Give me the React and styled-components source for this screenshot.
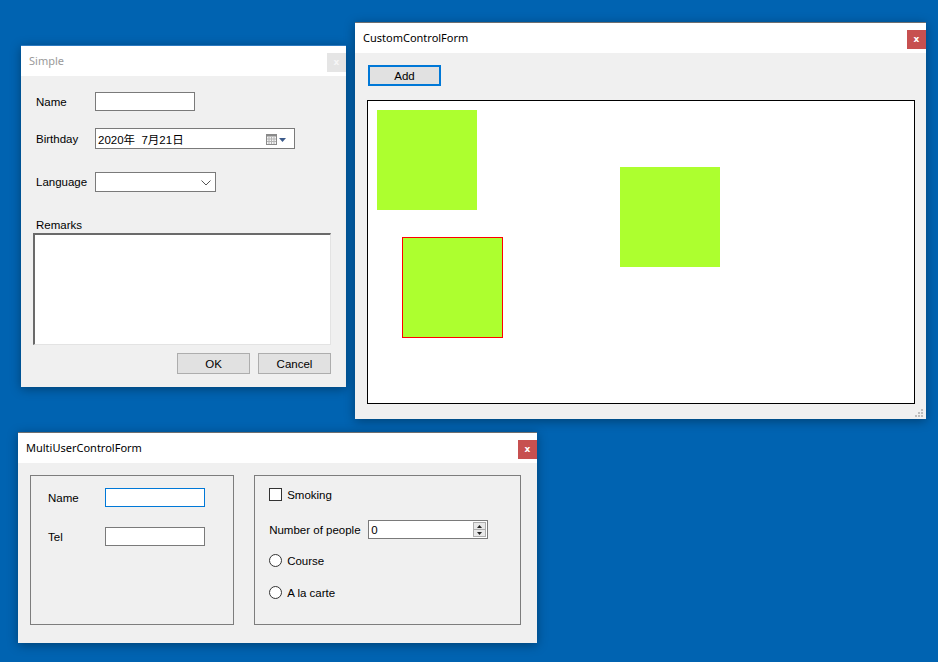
import { createGlobalStyle, styled } from "styled-components";

const GlobalStyle = createGlobalStyle`
  html, body {
    margin: 0;
    padding: 0;
    background: #0063b1;
  }
  body {
    font-family: "Liberation Sans", Arial, sans-serif;
    font-size: 11.5px;
    color: #000;
  }
`;

const Desktop = styled.div`
  position: relative;
  width: 938px;
  height: 662px;
  overflow: hidden;
  background: #0063b1;
`;

const Window = styled.div`
  position: absolute;
  left: ${(p) => p.$x}px;
  top: ${(p) => p.$y}px;
  width: ${(p) => p.$w}px;
  height: ${(p) => p.$h}px;
  display: flex;
  flex-direction: column;
  background: #f0f0f0;
  border-top: 1px solid ${(p) => (p.$active ? "#6f6f6f" : "#2b79c0")};
  box-sizing: border-box;
  box-shadow: 0 2px 10px rgba(0, 0, 0, 0.35);
`;

const TitleBar = styled.div`
  height: 30px;
  flex: none;
  display: flex;
  align-items: flex-start;
  justify-content: space-between;
  background: #fff;
`;

const Title = styled.span`
  font-family: "Noto Sans", "Open Sans", sans-serif;
  font-size: 11px;
  line-height: 30px;
  padding-left: 8px;
  color: ${(p) => (p.$active ? "#000" : "#9a9a9a")};
`;

const CloseBtn = styled.div`
  width: 19px;
  height: 19px;
  margin-top: 7px;
  display: flex;
  align-items: center;
  justify-content: center;
  background: ${(p) => (p.$active ? "#c75050" : "#e5e5e5")};
  color: ${(p) => (p.$active ? "#fff" : "#f6f6f6")};
  font-family: "DejaVu Sans", sans-serif;
  font-weight: bold;
  font-size: 9px;
  line-height: 1;
`;

const Body = styled.div`
  flex: 1;
  display: flex;
  flex-direction: column;
  padding: ${(p) => p.$pad};
  position: relative;
`;

const Row = styled.div`
  display: flex;
  align-items: center;
  margin-top: ${(p) => p.$mt || 0}px;
  margin-left: ${(p) => p.$ml || 0}px;
`;

const Label = styled.span`
  width: ${(p) => p.$w || 59}px;
  flex: none;
  white-space: nowrap;
`;

const TextBox = styled.div`
  width: ${(p) => p.$w || 100}px;
  height: ${(p) => p.$h || 19}px;
  box-sizing: border-box;
  background: #fff;
  border: 1px solid ${(p) => (p.$focus ? "#0078d7" : "#7a7a7a")};
  display: flex;
  align-items: center;
  position: relative;
`;

const FieldText = styled.span`
  padding-left: 2px;
  font-family: "Liberation Sans", "Noto Sans CJK JP", sans-serif;
  font-size: 11.5px;
  flex: 1;
  white-space: pre;
`;

const Remarks = styled.div`
  margin-top: 26px;
  margin-left: 3px;
  height: 14px;
  line-height: 14px;
`;

const TextArea = styled.div`
  margin-top: 1px;
  height: 112px;
  box-sizing: border-box;
  background: #fff;
  border-top: 2px solid #6a6a6a;
  border-left: 2px solid #6a6a6a;
  border-right: 1px solid #e3e3e3;
  border-bottom: 1px solid #e3e3e3;
`;

const Buttons = styled.div`
  display: flex;
  justify-content: flex-end;
  gap: 8px;
  margin-top: 8px;
`;

const Button = styled.div`
  width: ${(p) => p.$w || 73}px;
  height: 21px;
  box-sizing: border-box;
  background: #e1e1e1;
  border: ${(p) => (p.$focus ? "2px solid #0078d7" : "1px solid #adadad")};
  display: flex;
  align-items: center;
  justify-content: center;
`;

const Canvas = styled.div`
  position: relative;
  margin-top: 14px;
  width: 548px;
  height: 304px;
  box-sizing: border-box;
  background: #fff;
  border: 1px solid #000;
`;

const Square = styled.div`
  position: absolute;
  left: ${(p) => p.$x}px;
  top: ${(p) => p.$y}px;
  background: #adff2f;
  box-sizing: content-box;
  border: ${(p) => (p.$selected ? "1px solid #ff0000" : "none")};
  width: ${(p) => (p.$selected ? 99 : 100)}px;
  height: ${(p) => (p.$selected ? 99 : 100)}px;
`;

const Grip = styled.svg`
  position: absolute;
  right: 2px;
  bottom: 1px;
`;

const Groups = styled.div`
  display: flex;
  gap: 20px;
`;

const Group = styled.div`
  width: ${(p) => p.$w}px;
  height: 150px;
  box-sizing: border-box;
  border: 1px solid #7d7d7d;
  padding: ${(p) => p.$pad};
  display: flex;
  flex-direction: column;
`;

const Check = styled.div`
  width: 13px;
  height: 13px;
  box-sizing: border-box;
  border: 1px solid #333;
  background: #fff;
  margin-right: 5px;
`;

const Radio = styled.div`
  width: 13px;
  height: 13px;
  box-sizing: border-box;
  border: 1px solid #333;
  border-radius: 50%;
  background: #fff;
  margin-right: 5px;
`;

const Spin = styled.div`
  width: 13px;
  height: 15px;
  margin-right: 1px;
  box-sizing: border-box;
  border: 1px solid #adadad;
  background: #e8e8e8;
  display: flex;
  flex-direction: column;
`;

const SpinHalf = styled.div`
  flex: 1;
  display: flex;
  align-items: center;
  justify-content: center;
  border-top: ${(p) => (p.$bottom ? "1px solid #adadad" : "none")};
`;

function WinChrome({ title, active, children }) {
  return (
    <>
      <TitleBar>
        <Title $active={active}>{title}</Title>
        <CloseBtn $active={active}>x</CloseBtn>
      </TitleBar>
      {children}
    </>
  );
}

function SimpleForm() {
  return (
    <Window $x={21} $y={45} $w={325} $h={342}>
      <WinChrome title="Simple">
        <Body $pad="16px 15px 0 12px">
          <Row $ml={3}>
            <Label>Name</Label>
            <TextBox />
          </Row>
          <Row $mt={17} $ml={3}>
            <Label>Birthday</Label>
            <TextBox $w={200} $h={21}>
              <FieldText>{"2020年  7月21日"}</FieldText>
              <svg width="22" height="12" viewBox="0 0 22 12" style={{ marginRight: 6 }}>
                <rect x="0.5" y="1.5" width="10" height="10" fill="#f4f4f4" stroke="#8a8a8a" />
                <rect x="0.5" y="1.5" width="10" height="2" fill="#8a8a8a" />
                <path d="M3 4v7M5.5 4v7M8 4v7M1 6h9M1 8.5h9" stroke="#b4b4b4" strokeWidth="1" />
                <path d="M13 5h7l-3.5 4z" fill="#3c5a8a" />
              </svg>
            </TextBox>
          </Row>
          <Row $mt={23} $ml={3}>
            <Label>Language</Label>
            <TextBox $w={121} $h={20}>
              <FieldText />
              <svg width="10" height="6" viewBox="0 0 10 6" style={{ marginRight: 4, marginTop: 2 }}>
                <path d="M0.5 0.5l4.5 4.5 4.5-4.5" fill="none" stroke="#555" strokeWidth="1" />
              </svg>
            </TextBox>
          </Row>
          <Remarks>Remarks</Remarks>
          <TextArea />
          <Buttons>
            <Button>OK</Button>
            <Button>Cancel</Button>
          </Buttons>
        </Body>
      </WinChrome>
    </Window>
  );
}

function CustomControlForm() {
  return (
    <Window $x={355} $y={22} $w={571} $h={397} $active>
      <WinChrome title="CustomControlForm" active>
        <Body $pad="12px 12px 0 12px">
          <Row $ml={1}>
            <Button $w={73} $focus>Add</Button>
          </Row>
          <Canvas>
            <Square $x={9} $y={9} />
            <Square $x={252} $y={66} />
            <Square $x={34} $y={136} $selected />
          </Canvas>
          <Grip width="9" height="9" viewBox="0 0 9 9">
            {[
              [6, 0], [6, 3], [3, 3], [6, 6], [3, 6], [0, 6],
            ].map(([x, y]) => (
              <rect key={`${x}-${y}`} x={x} y={y} width="2" height="2" fill="#bdbdbd" />
            ))}
          </Grip>
        </Body>
      </WinChrome>
    </Window>
  );
}

function MultiUserControlForm() {
  return (
    <Window $x={18} $y={432} $w={519} $h={211} $active>
      <WinChrome title="MultiUserControlForm" active>
        <Body $pad="12px 16px 0 12px">
          <Groups>
            <Group $w={205} $pad="12px 0 0 17px">
              <Row>
                <Label $w={57}>Name</Label>
                <TextBox $focus />
              </Row>
              <Row $mt={20}>
                <Label $w={57}>Tel</Label>
                <TextBox />
              </Row>
            </Group>
            <Group $w={268} $pad="12px 0 0 14px">
              <Row>
                <Check />
                <span>Smoking</span>
              </Row>
              <Row $mt={19}>
                <Label $w={99}>Number of people</Label>
                <TextBox $w={120}>
                  <FieldText>0</FieldText>
                  <Spin>
                    <SpinHalf>
                      <svg width="5" height="3" viewBox="0 0 5 3">
                        <path d="M0 3h5L2.5 0z" fill="#222" />
                      </svg>
                    </SpinHalf>
                    <SpinHalf $bottom>
                      <svg width="5" height="3" viewBox="0 0 5 3">
                        <path d="M0 0h5L2.5 3z" fill="#222" />
                      </svg>
                    </SpinHalf>
                  </Spin>
                </TextBox>
              </Row>
              <Row $mt={15}>
                <Radio />
                <span>Course</span>
              </Row>
              <Row $mt={19}>
                <Radio />
                <span>A la carte</span>
              </Row>
            </Group>
          </Groups>
        </Body>
      </WinChrome>
    </Window>
  );
}

export default function App() {
  return (
    <>
      <GlobalStyle />
      <Desktop>
        <SimpleForm />
        <CustomControlForm />
        <MultiUserControlForm />
      </Desktop>
    </>
  );
}
